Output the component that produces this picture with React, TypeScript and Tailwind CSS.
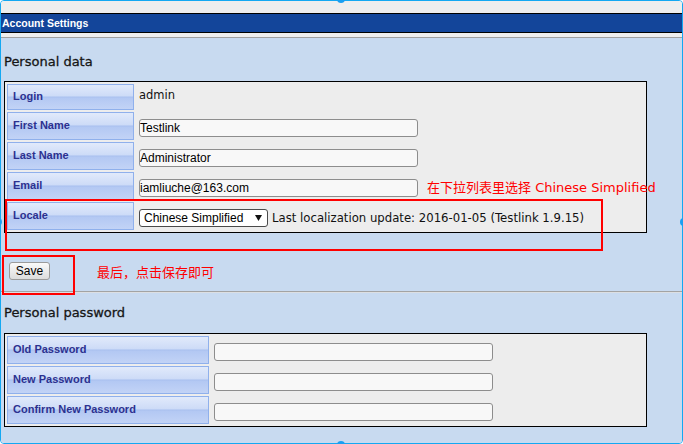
import React from "react";

const labelCls =
  "flex items-center pb-[2px] pl-[5px] border border-[#8fb0ec] bg-[linear-gradient(to_bottom,#e1eafb_0%,#cddbf7_46%,#a9c0ef_50%,#b3c8f3_54%,#c2d3f6_100%)] font-['Liberation_Sans',Arial,sans-serif] text-[11px] font-bold leading-[13px] text-[#2c3190]";

const inputCls =
  "block h-[18px] w-[279px] rounded-[3px] border border-[#8d8d8d] bg-[#f8f8f8] px-0 font-['Liberation_Sans',Arial,sans-serif] text-[12px] leading-[14px] text-black outline-none";

const heading =
  "font-['DejaVu_Sans',sans-serif] text-[13px] leading-[16px] text-[#161616] [-webkit-text-stroke:0.3px_#161616]";

const redNote =
  "absolute font-['DejaVu_Sans','Noto_Sans_CJK_SC',sans-serif] text-[13px] leading-[16px] text-[#ff0000] whitespace-nowrap";

function Field({ label, value }: { label: string; value: string }) {
  return (
    <>
      <div className={`${labelCls} h-[28px]`}>{label}</div>
      <div className="h-[28px] pt-[7px]">
        <input readOnly defaultValue={value} className={inputCls} />
      </div>
    </>
  );
}

export default function App() {
  return (
    <div className="relative h-[444px] w-[683px] overflow-hidden bg-white">
      <div className="flex h-full w-full flex-col overflow-hidden rounded-[4px] border border-[#14a8f2]">
        <div className="h-[12px] shrink-0 bg-[#eeeeee]" />
        <div className="h-[20px] shrink-0 border-y border-black bg-[#13459a] pl-[1px] font-['Liberation_Sans',Arial,sans-serif] text-[10.5px] font-bold leading-[18px] text-white">
          Account Settings
        </div>
        <div className="h-[5px] shrink-0 border-b border-[#a0a0a0] bg-[#eeeeee]" />

        <div className="flex flex-1 flex-col bg-[#c8daf0]">
          <h2 className={`${heading} ml-[3px] mt-[16px]`}>Personal data</h2>

          <div className="ml-[3px] mt-[11px] grid w-[643px] grid-cols-[127px_1fr] gap-x-[5px] gap-y-[2px] border border-black bg-[#ededed] p-[2px]">
            <div className={`${labelCls} h-[26px]`}>Login</div>
            <div className="h-[26px] pt-[4px] font-['DejaVu_Sans',sans-serif] text-[11.5px] leading-[14px] text-[#111]">admin</div>
            <Field label="First Name" value="Testlink" />
            <Field label="Last Name" value="Administrator" />
            <Field label="Email" value="iamliuche@163.com" />
            <div className={`${labelCls} h-[28px]`}>Locale</div>
            <div className="h-[28px] pt-[7px]">
              <div className="flex h-[18px] items-center">
                <div className="flex h-[18px] w-[129px] items-center rounded-[3px] border border-[#4a4a4a] bg-white pl-[4px] font-['Liberation_Sans',Arial,sans-serif] text-[12px] leading-[14px] text-black">
                  Chinese Simplified
                  <svg width="7" height="6" viewBox="0 0 7 6" className="ml-auto mr-[5px]">
                    <polygon points="0,0 7,0 3.5,6" fill="#111" />
                  </svg>
                </div>
                <span className="ml-[4px] font-['DejaVu_Sans',sans-serif] text-[11.7px] leading-[14px] text-[#111]">
                  Last localization update: 2016-01-05 (Testlink 1.9.15)
                </span>
              </div>
            </div>
          </div>

          <button className="ml-[8px] mt-[29px] h-[18px] w-[41px] self-start rounded-[3px] border border-[#9b9b9b] bg-[linear-gradient(to_bottom,#fafafa,#dcdcdc)] font-['Liberation_Sans',Arial,sans-serif] text-[12px] leading-[16px] text-black">
            Save
          </button>

          <div className="mt-[11px] h-[2px] border-t border-[#a3a3a3] bg-[#dcdfe3]" />

          <h2 className={`${heading} ml-[3px] mt-[12px]`}>Personal password</h2>

          <div className="ml-[3px] mt-[12px] grid w-[643px] grid-cols-[202px_1fr] gap-x-[5px] gap-y-[2px] border border-black bg-[#ededed] p-[2px]">
            <Field label="Old Password" value="" />
            <Field label="New Password" value="" />
            <Field label="Confirm New Password" value="" />
          </div>
        </div>
      </div>

      {/* annotations */}
      <div className="absolute left-[5px] top-[199px] h-[52px] w-[598px] border-2 border-[#ff0000]" />
      <div className="absolute left-[2px] top-[255px] h-[40px] w-[73px] border-2 border-[#ff0000]" />
      <div className={`${redNote} left-[427px] top-[180px]`}>在下拉列表里选择 Chinese Simplified</div>
      <div className={`${redNote} left-[97px] top-[265px]`}>最后，点击保存即可</div>

      {/* selection handles */}
      <div className="absolute left-[337px] top-[-5px] h-[8px] w-[8px] rounded-full bg-[#1a9ff2]" />
      <div className="absolute left-[337px] top-[441px] h-[8px] w-[8px] rounded-full bg-[#1a9ff2]" />
      <div className="absolute left-[-6px] top-[218px] h-[8px] w-[8px] rounded-full bg-[#1a9ff2]" />
      <div className="absolute left-[680px] top-[218px] h-[8px] w-[8px] rounded-full bg-[#1a9ff2]" />
    </div>
  );
}
